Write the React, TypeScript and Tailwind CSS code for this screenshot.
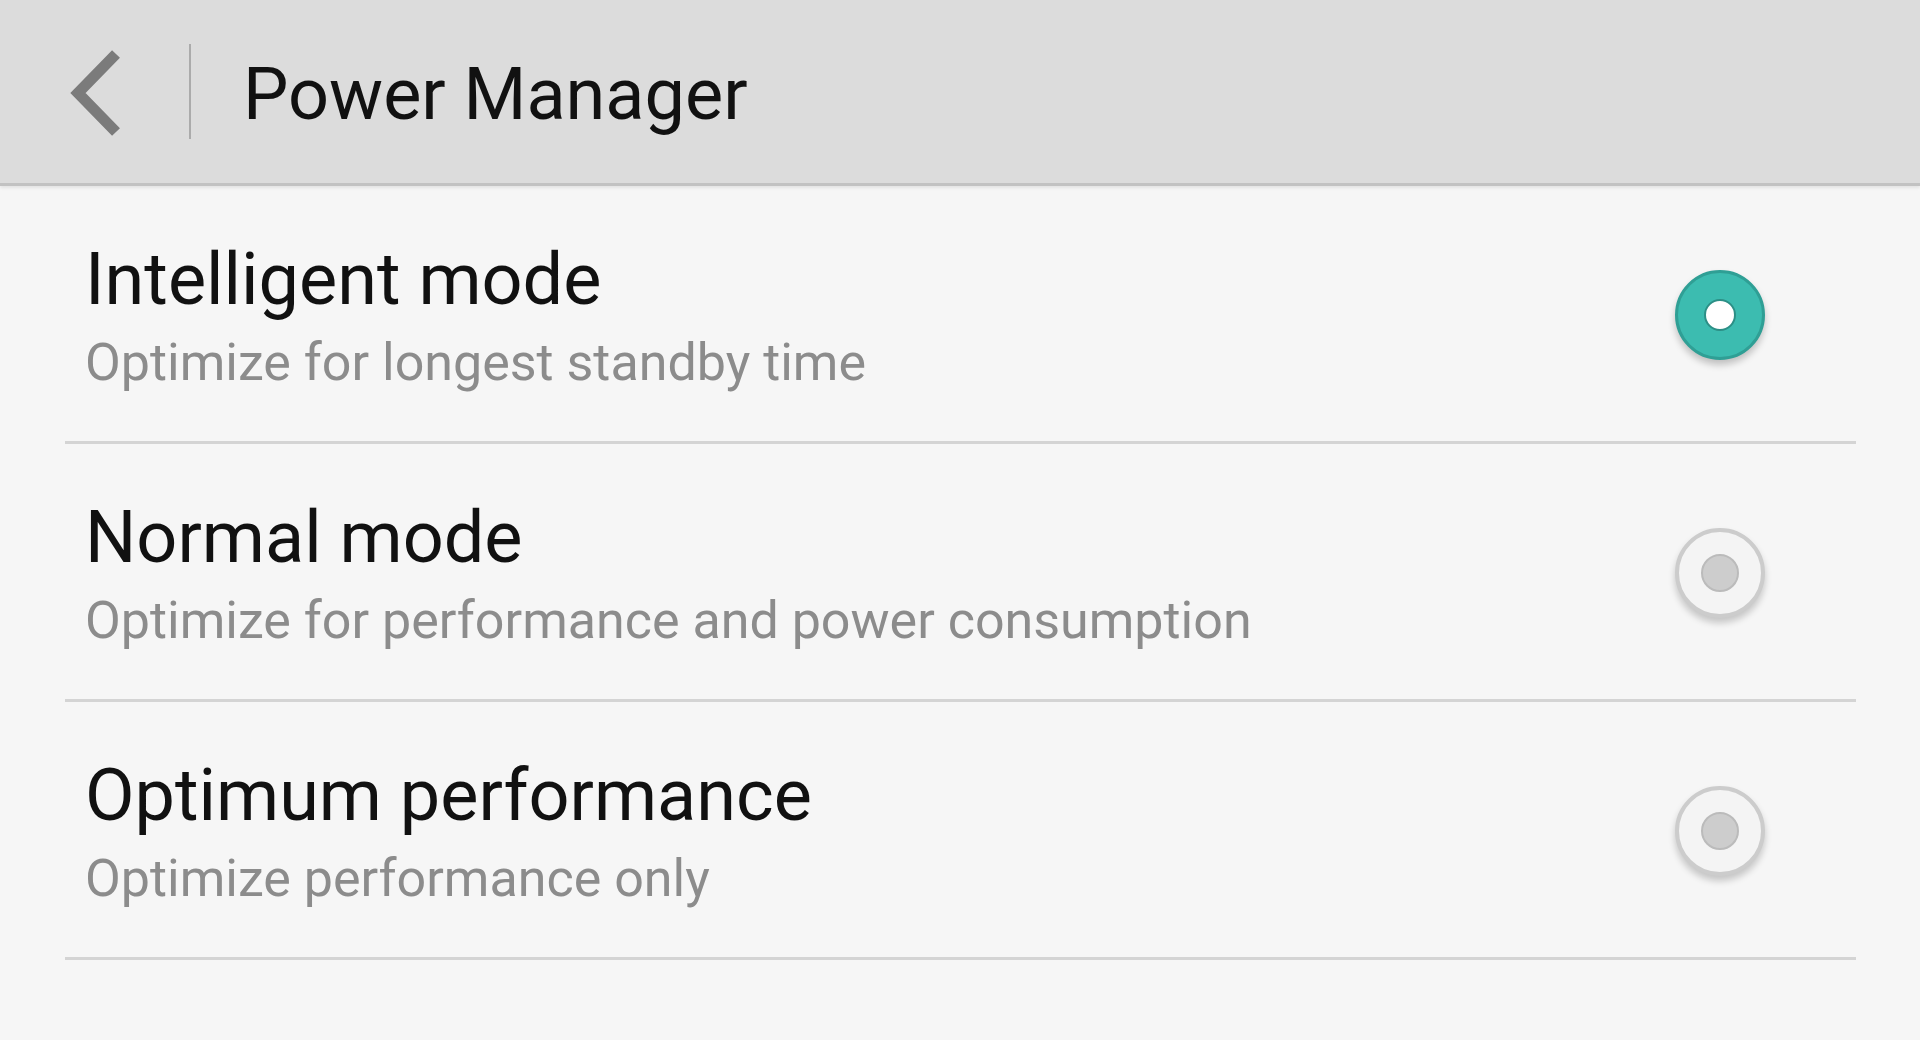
const modes = [
  { title: 'Intelligent mode', desc: 'Optimize for longest standby time', selected: true },
  { title: 'Normal mode', desc: 'Optimize for performance and power consumption', selected: false },
  { title: 'Optimum performance', desc: 'Optimize performance only', selected: false },
]

function Radio({ on }: { on: boolean }) {
  if (on) {
    return (
      <div className="w-[90px] h-[90px] rounded-full bg-[#3cbcb0] border-[3px] border-[#2f9f95] shadow-[0_5px_7px_rgba(0,0,0,0.22)] flex items-center justify-center">
        <div className="w-[32px] h-[32px] rounded-full bg-white border-[2px] border-[#2c8f86]" />
      </div>
    )
  }
  return (
    <div className="w-[90px] h-[90px] rounded-full bg-[#f4f4f4] border-[4px] border-[#cccccc] shadow-[0_5px_7px_rgba(0,0,0,0.2)] flex items-center justify-center">
      <div className="w-[38px] h-[38px] rounded-full bg-[#cdcdcd] border-[2px] border-[#bbbbbb]" />
    </div>
  )
}

export default function App() {
  return (
    <div className="w-[1920px] h-[1040px] bg-[#f6f6f6] overflow-hidden font-['Roboto',sans-serif]">
      <header className="h-[186px] bg-[#dcdcdc] border-b-[3px] border-[#c2c2c2] shadow-[0_2px_3px_rgba(0,0,0,0.08)] flex items-center">
        <svg width="60" height="90" viewBox="0 0 60 90" className="ml-[64px] mt-[2px]">
          <polyline points="52,6 14,45 52,84" fill="none" stroke="#7b7b7b" strokeWidth="11" />
        </svg>
        <div className="ml-[65px] w-[2px] h-[95px] bg-[#ababab]" />
        <h1 className="ml-[52px] mt-[6px] text-[72px] leading-none text-[#111] font-normal">Power Manager</h1>
      </header>
      <div className="px-[65px] pr-[64px]">
        {modes.map(m => (
          <div key={m.title} className="h-[258px] border-b-[3px] border-[#d4d4d4] flex items-center">
            <div className="flex-1 pl-[20px] pt-[4px]">
              <div className="text-[72px] leading-[1.2] text-[#111]">{m.title}</div>
              <div className="mt-[9px] text-[52px] leading-[1.2] text-[#8c8c8c]">{m.desc}</div>
            </div>
            <div className="mr-[91px] mt-[2px]">
              <Radio on={m.selected} />
            </div>
          </div>
        ))}
      </div>
    </div>
  )
}
